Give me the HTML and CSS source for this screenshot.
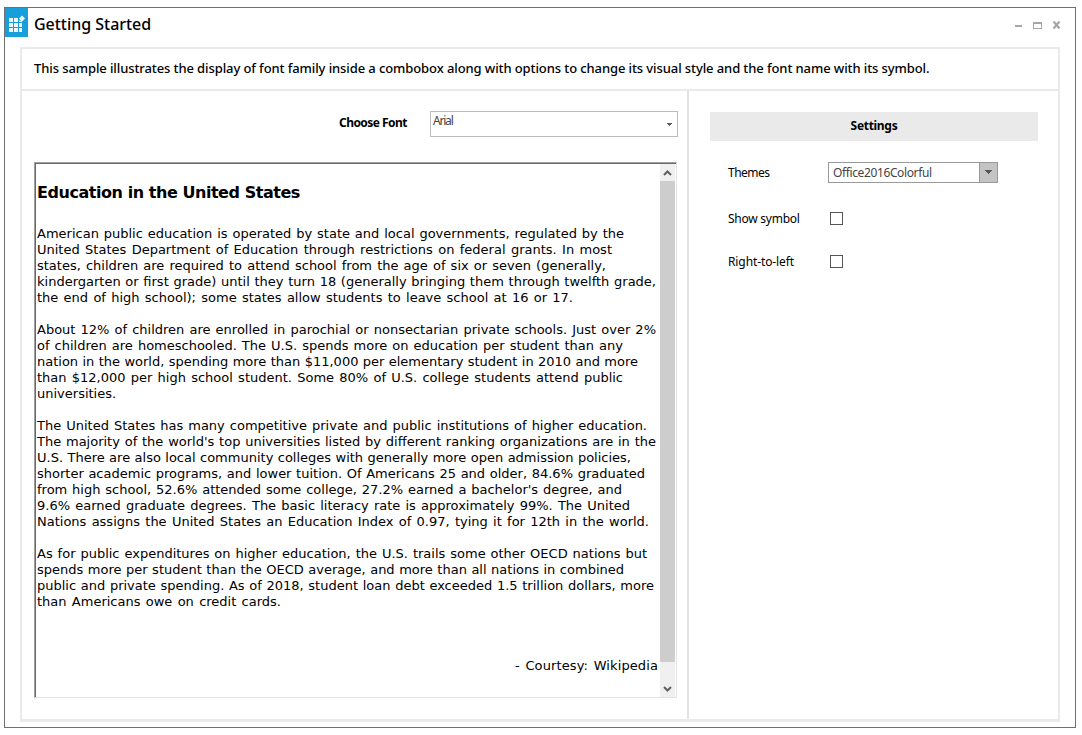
FILE: index.html
```html
<!DOCTYPE html>
<html lang="en">
<head>
<meta charset="utf-8">
<title>Getting Started</title>
<link rel="stylesheet" href="styles.css">
</head>
<body>
<main class="window">
  <header class="titlebar">
    <svg class="app-icon" width="23" height="29" viewBox="0 0 23 29">
      <path fill="#fff" fill-opacity=".92" d="M4 10h4v4H4zM9 10h4v4H9zM4 15h4v4H4zM9 15h4v4H9zM14 15h3v4h-3zM4 20h4v4H4zM9 20h4v4H9zM14 20h3v4h-3zM14 12.500h3v1.500h-3zM17 7.500l3 3-3 3-3-3z"/>
    </svg>
    <h1 class="title">Getting Started</h1>
    <div class="window-buttons">
      <svg width="47" height="11" viewBox="0 0 47 11">
        <path fill="#a6a6a6" d="M0 5h7v2H0zM18 2h9v7h-9z"/>
        <path fill="#fff" d="M19 4h7v4h-7z"/>
        <path fill="none" stroke="#a6a6a6" stroke-width="2.200" d="M38.500 1.500l6 7M44.500 1.500l-6 7"/>
      </svg>
    </div>
  </header>
  <div class="panel">
    <p class="description">This sample illustrates the display of font family inside a combobox along with options to change its visual style and the font name with its symbol.</p>
    <div class="columns">
      <section class="editor">
        <div class="font-row">
          <label class="font-label">Choose Font</label>
          <div class="font-combo"><span>Arial</span>
            <svg width="5" height="3" viewBox="0 0 5 3"><path fill="#5c5c5c" d="M0 0h5v1H4v1H3v1H2V2H1V1H0z"/></svg>
          </div>
        </div>
        <div class="richtext">
          <article class="document">
            <h2>Education in the United States</h2>
            <p class="intro"><span>American public education is operated by state and local governments, regulated by the</span><span>United States Department of Education through restrictions on federal grants. In most</span><span>states, children are required to attend school from the age of six or seven (generally,</span><span>kindergarten or first grade) until they turn 18 (generally bringing them through twelfth grade,</span><span>the end of high school); some states allow students to leave school at 16 or 17.</span></p>
            <p class="schools"><span>About 12% of children are enrolled in parochial or nonsectarian private schools. Just over 2%</span><span>of children are homeschooled. The U.S. spends more on education per student than any</span><span>nation in the world, spending more than $11,000 per elementary student in 2010 and more</span><span>than $12,000 per high school student. Some 80% of U.S. college students attend public</span><span>universities.</span></p>
            <p class="higher"><span>The United States has many competitive private and public institutions of higher education.</span><span>The majority of the world's top universities listed by different ranking organizations are in the</span><span>U.S. There are also local community colleges with generally more open admission policies,</span><span>shorter academic programs, and lower tuition. Of Americans 25 and older, 84.6% graduated</span><span>from high school, 52.6% attended some college, 27.2% earned a bachelor's degree, and</span><span>9.6% earned graduate degrees. The basic literacy rate is approximately 99%. The United</span><span>Nations assigns the United States an Education Index of 0.97, tying it for 12th in the world.</span></p>
            <p class="spending"><span>As for public expenditures on higher education, the U.S. trails some other OECD nations but</span><span>spends more per student than the OECD average, and more than all nations in combined</span><span>public and private spending. As of 2018, student loan debt exceeded 1.5 trillion dollars, more</span><span>than Americans owe on credit cards.</span></p>
            <p class="courtesy">- Courtesy: Wikipedia</p>
          </article>
          <div class="scrollbar">
            <svg width="15" height="17" viewBox="0 0 15 17"><path fill="none" stroke="#606060" stroke-width="2" d="M4 11l3.500-3.500L11 11"/></svg>
            <div class="thumb"></div>
            <svg width="15" height="17" viewBox="0 0 15 17"><path fill="none" stroke="#606060" stroke-width="2" d="M4 7l3.500 3.500L11 7"/></svg>
          </div>
        </div>
      </section>
      <aside class="settings">
        <h3 class="settings-title">Settings</h3>
        <div class="setting theme"><span class="name">Themes</span>
          <div class="theme-combo"><span>Office2016Colorful</span><i><svg width="7" height="4" viewBox="0 0 7 4"><path fill="#555" d="M0 0h7v1H6v1H5v1H4v1H3V3H2V2H1V1H0z"/></svg></i></div>
        </div>
        <div class="setting symbol"><span class="name">Show symbol</span><div class="checkbox"></div></div>
        <div class="setting rtl"><span class="name">Right-to-left</span><div class="checkbox"></div></div>
      </aside>
    </div>
  </div>
</main>
</body>
</html>
```
FILE: styles.css
```css
* { box-sizing: border-box; }
body { margin: 0; background: #fff; color: #000; font: 12px/16px "Noto Sans", "Open Sans", sans-serif; overflow: hidden; }
h1, h2, h3, p { margin: 0; }
svg { display: block; }
.window { width: 1072px; height: 721px; margin: 7px 0 0 4px; border: 1px solid #707070; }
.titlebar { display: flex; height: 39px; }
.app-icon { background: #169fdb; }
.title { margin: 4px 0 0 6px; font-size: 16px; line-height: 24px; font-weight: 500; letter-spacing: -0.03px; white-space: nowrap; }
.window-buttons { margin: 12px 13px 0 auto; }
.panel { width: 1040px; height: 675px; margin-left: 15px; border: 2px solid #eaeaea; border-bottom-width: 3px; display: flex; flex-direction: column; }
.description { height: 42px; padding: 11px 0 0 12px; border-bottom: 2px solid #eaeaea; font-weight: 500; font-size: 13px; white-space: nowrap; letter-spacing: -0.1px; }
.columns { display: flex; flex: 1; }
.editor { width: 667px; padding: 20px 10px 0 12px; border-right: 2px solid #e3e3e3; }
.font-row { display: flex; justify-content: flex-end; height: 51px; margin-right: -1px; }
.font-label { font-weight: 700; width: 91px; padding-top: 4px; letter-spacing: -0.55px; white-space: nowrap; }
.font-combo { display: flex; justify-content: space-between; width: 248px; height: 26px; border: 1px solid #bcbcbc; color: #444; padding: 1px 5px 0 2px; letter-spacing: -1.2px; }
.font-combo span { line-height: 16px; }
.font-combo svg { margin-top: 10px; }
.richtext { display: flex; width: 643px; height: 536px; border: 1px solid #a0a0a0; border-right-color: #e3e3e3; border-bottom-color: #e3e3e3; box-shadow: inset 1px 1px #696969; }
.document { flex: 1; min-width: 0; padding: 19px 0 0 2px; font: 13px/16px "DejaVu Sans", sans-serif; white-space: nowrap; }
.document h2 { font-size: 16px; line-height: 22px; margin-bottom: 22px; letter-spacing: -0.45px; }
.document p { margin-bottom: 16px; }
/* each line is set to its own measure, with the slack shared between words */
.document p span { display: block; white-space: normal; text-align-last: justify; }
.schools span:last-child { text-align-last: left; }
.intro span:nth-child(1) { width: 587px; }
.intro span:nth-child(2) { width: 575px; }
.intro span:nth-child(3) { width: 569px; }
.intro span:nth-child(4) { width: 619px; }
.intro span:nth-child(5) { width: 536px; }
.schools span:nth-child(1) { width: 619px; }
.schools span:nth-child(2) { width: 586px; }
.schools span:nth-child(3) { width: 601px; }
.schools span:nth-child(4) { width: 586px; }
.higher span:nth-child(1) { width: 610px; }
.higher span:nth-child(2) { width: 619px; }
.higher span:nth-child(3) { width: 594px; }
.higher span:nth-child(4) { width: 608px; }
.higher span:nth-child(5) { width: 585px; }
.higher span:nth-child(6) { width: 593px; }
.higher span:nth-child(7) { width: 612px; }
.spending span:nth-child(1) { width: 610px; }
.spending span:nth-child(2) { width: 587px; }
.spending span:nth-child(3) { width: 617px; }
.spending span:nth-child(4) { width: 244px; }
.document .courtesy { text-align: right; margin-top: 48px; padding-right: 2px; letter-spacing: 0.1px; word-spacing: 1.5px; }
.scrollbar { width: 15px; margin: 1px 1px 0 0; background: #f0f0f0; display: flex; flex-direction: column; }
.thumb { height: 481px; margin-bottom: 18px; background: #cdcdcd; }
.settings { flex: 1; padding: 21px 20px 0 21px; }
.settings-title { height: 29px; background: #eaeaea; text-align: center; font-size: 12px; line-height: 27px; letter-spacing: -0.3px; }
.setting { display: flex; margin-left: 18px; }
.name { width: 102px; margin-top: -1px; white-space: nowrap; letter-spacing: -0.25px; }
.rtl .name { letter-spacing: -0.1px; }
.theme { margin-top: 21px; height: 50px; }
.theme .name { width: 100px; padding-top: 4px; letter-spacing: -0.5px; }
.theme-combo { width: 170px; height: 21px; border: 1px solid #999; color: #444; display: flex; justify-content: space-between; padding-left: 4px; line-height: 19px; letter-spacing: -0.38px; }
.theme-combo i { width: 18px; background: #c4c4c4; border-left: 1px solid #999; padding: 7px 0 0 5px; }
.symbol { height: 43px; }
.checkbox { width: 13px; height: 13px; border: 1px solid #555; }
```
